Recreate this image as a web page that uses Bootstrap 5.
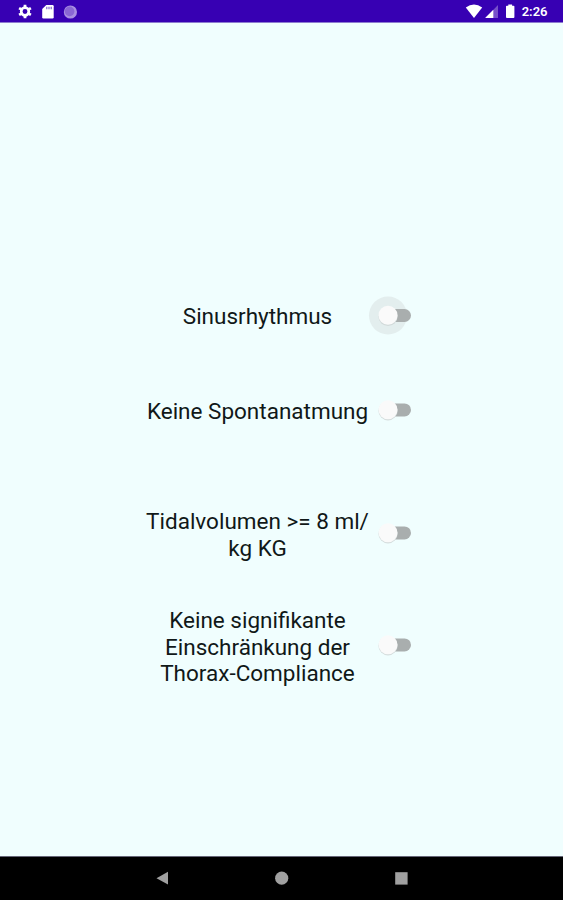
<!DOCTYPE html>
<html lang="de">
<head>
<meta charset="utf-8">
<meta name="viewport" content="width=device-width, initial-scale=1">
<title>Sinusrhythmus</title>
<link rel="stylesheet" href="https://cdn.jsdelivr.net/npm/bootstrap@5.3.0/dist/css/bootstrap.min.css">
<style>
body { font-family: Roboto, sans-serif; background: #f0fefe; color: #101818; }
.screen { height: 900px; }
.statusbar { height: 23px; background: #3700b3; border-bottom: 1px solid #8d7bd0; padding: 0 15.5px 0 17px; color: #fff; }
.clock { font-size: 13px; font-weight: 600; line-height: 20px; padding-top: 2px; margin-left: 5px; }
.options { padding: 280px 0 0 144px; }
.option-label { width: 227px; font-size: 22.5px; line-height: 26.5px; }
.two-line, .three-line { padding-top: 1px; margin-bottom: -1px; }
.gap-a { margin-bottom: 68px; }
.gap-b { margin-bottom: 83.2px; }
.gap-c { margin-bottom: 46.2px; }
.toggle { width: 46px; height: 40px; margin: -8px 0; overflow: visible; }
.softkeys { height: 44px; background: #000; border-top: 1px solid #667; }
.softkeys svg { width: 563px; height: 43px; }
</style>
</head>
<body>
<div class="screen d-flex flex-column overflow-hidden">
  <header class="statusbar d-flex align-items-center justify-content-between flex-shrink-0">
    <svg width="62" height="22" viewBox="17 0 62 22">
      <g fill="none" stroke="#fff">
        <circle cx="25" cy="11.5" r="3.8" stroke-width="2.7"/>
        <path stroke-width="2.8" d="M25 4.7v2.6M25 15.7v2.6M19.1 8.1l2.3 1.3M28.6 13.6l2.3 1.3M19.1 14.9l2.3-1.3M28.6 9.4l2.3-1.3"/>
      </g>
      <path fill="#fff" d="M46.3 5h6.2q1.2 0 1.2 1.2v11q0 1.2-1.2 1.2h-9.1q-1.2 0-1.2-1.2V9z"/>
      <path stroke="#7a55cc" stroke-width="1.1" d="M46.8 6.7v2.5M49 6.7v2.5M51.2 6.7v2.5"/>
      <circle cx="70.4" cy="12" r="6.6" fill="#a98fe2"/>
      <circle cx="69.6" cy="11.4" r="4.8" fill="#8a66d4"/>
    </svg>
    <div class="d-flex align-items-center">
      <svg width="52" height="22" viewBox="464.5 0 52 22">
        <path fill="#fff" d="M465.3 7.4Q473.5 1.8 481.7 7.4L473.5 18z"/>
        <path fill="#7650ca" d="M497.5 5v13H485z"/>
        <path fill="#fff" d="M492.8 9.8V18H484.6z"/>
        <path fill="#fff" d="M507.8 4.4h3.8v1.3h1.4q.9 0 .9.9v10.5q0 .9-.9.9h-6.6q-.9 0-.9-.9V6.6q0-.9.9-.9h1.4z"/>
      </svg>
      <span class="clock">2:26</span>
    </div>
  </header>

  <main class="options flex-grow-1">
    <div class="d-flex align-items-center gap-a">
      <div class="option-label text-center">Sinusrhythmus</div>
      <svg class="toggle" viewBox="0 0 46 40">
        <circle cx="17" cy="19.5" r="19" fill="#e3eeee"/>
        <rect x="10" y="13" width="30" height="13" rx="6.5" fill="#a9aeae"/>
        <circle cx="17" cy="20.5" r="9.6" fill="#d2dada"/>
        <circle cx="17" cy="19.3" r="9.5" fill="#fafafa"/>
      </svg>
    </div>
    <div class="d-flex align-items-center gap-b">
      <div class="option-label text-center">Keine Spontanatmung</div>
      <svg class="toggle" viewBox="0 0 46 40">
        <rect x="10" y="12.4" width="30" height="13" rx="6.5" fill="#a9aeae"/>
        <circle cx="17" cy="19.8" r="9.6" fill="#d5dddd"/>
        <circle cx="17" cy="18.8" r="9.5" fill="#fafafa"/>
      </svg>
    </div>
    <div class="d-flex align-items-center gap-c">
      <div class="option-label two-line text-center">Tidalvolumen &gt;= 8 ml/<br>kg KG</div>
      <svg class="toggle" viewBox="0 0 46 40">
        <rect x="10" y="12.4" width="30" height="13" rx="6.5" fill="#a9aeae"/>
        <circle cx="17" cy="19.8" r="9.6" fill="#d5dddd"/>
        <circle cx="17" cy="18.8" r="9.5" fill="#fafafa"/>
      </svg>
    </div>
    <div class="d-flex align-items-center">
      <div class="option-label three-line text-center">Keine signifikante Einschränkung der Thorax-Compliance</div>
      <svg class="toggle" viewBox="0 0 46 40">
        <rect x="10" y="12.4" width="30" height="13" rx="6.5" fill="#a9aeae"/>
        <circle cx="17" cy="19.8" r="9.6" fill="#d5dddd"/>
        <circle cx="17" cy="18.8" r="9.5" fill="#fafafa"/>
      </svg>
    </div>
  </main>

  <footer class="softkeys flex-shrink-0">
    <svg class="d-block" viewBox="0 857 563 43" fill="#a0a0a0">
      <path d="M156.5 878.2L168 871.8v12.8z"/>
      <circle cx="281.7" cy="878.2" r="6.6"/>
      <rect x="395.2" y="872.2" width="12.4" height="12.4"/>
    </svg>
  </footer>
</div>
<script src="https://cdn.jsdelivr.net/npm/bootstrap@5.3.0/dist/js/bootstrap.bundle.min.js"></script>
</body>
</html>
